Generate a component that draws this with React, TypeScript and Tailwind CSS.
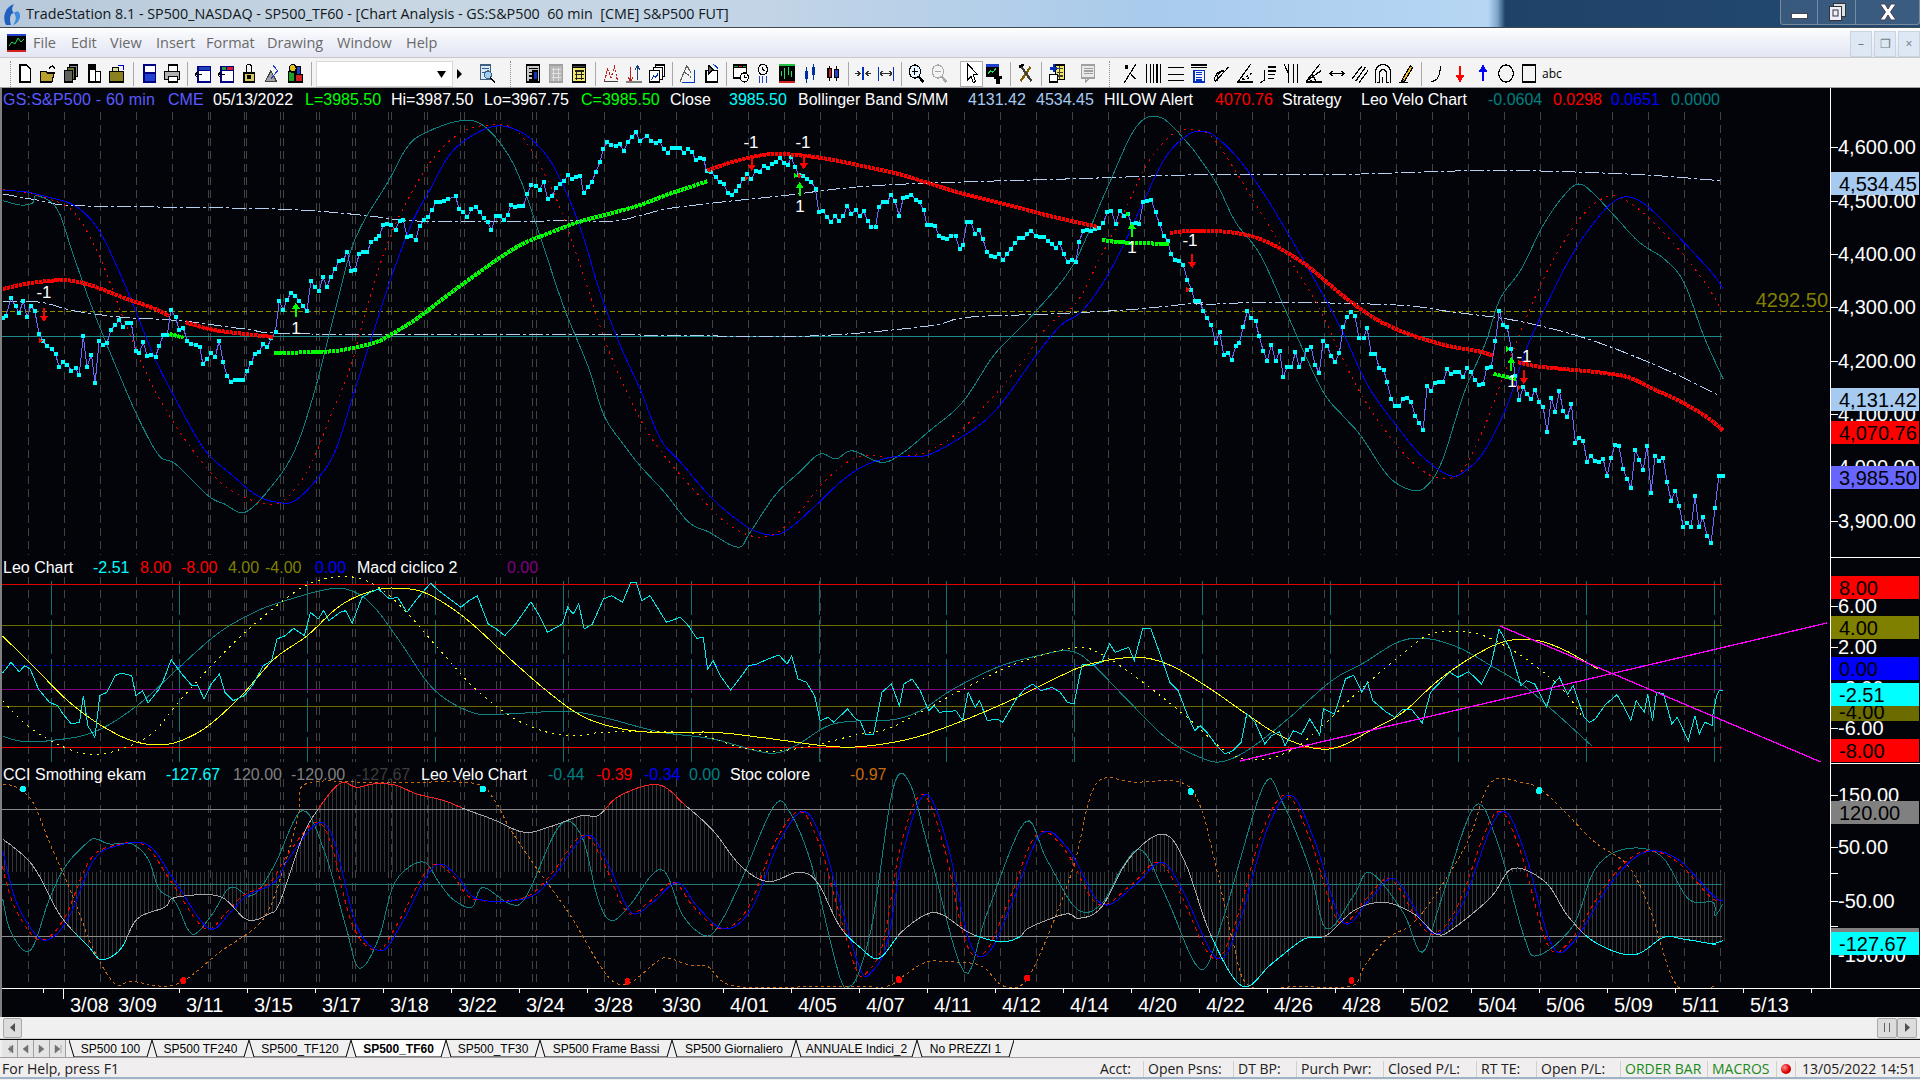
import React from "react";

type P = [number, number];
const map = (ox: number, sx: number, oy: number) => (pts: number[][]): P[] =>
  pts.map(([x, y]) => [ox + x / sx, oy + y / 3] as P);
const Z7 = map(0, 2.45, 100);
const Z8 = map(640, 2.45, 100);
const Z9 = map(1200, 2.8, 100);
const Z10 = map(0, 1.823, 550);
const Z11 = map(860, 1.823, 550);
const Z6 = map(1700, 3, 540);

const smooth = (pts: P[]): P[] => {
  const out: P[] = [];
  for (let i = 0; i < pts.length - 1; i++) {
    const p0 = pts[Math.max(0, i - 1)], p1 = pts[i], p2 = pts[i + 1], p3 = pts[Math.min(pts.length - 1, i + 2)];
    for (let k = 0; k < 6; k++) {
      const t = k / 6, t2 = t * t, t3 = t2 * t;
      out.push([
        0.5 * (2 * p1[0] + (p2[0] - p0[0]) * t + (2 * p0[0] - 5 * p1[0] + 4 * p2[0] - p3[0]) * t2 + (3 * p1[0] - p0[0] - 3 * p2[0] + p3[0]) * t3),
        0.5 * (2 * p1[1] + (p2[1] - p0[1]) * t + (2 * p0[1] - 5 * p1[1] + 4 * p2[1] - p3[1]) * t2 + (3 * p1[1] - p0[1] - 3 * p2[1] + p3[1]) * t3),
      ]);
    }
  }
  out.push(pts[pts.length - 1]);
  return out;
};
const str = (pts: P[]) => pts.map((p) => `${p[0].toFixed(1)},${p[1].toFixed(1)}`).join(" ");
const yAt = (pts: P[], x: number) => {
  for (let i = 0; i < pts.length - 1; i++) {
    if (pts[i][0] <= x && pts[i + 1][0] >= x) {
      const d = pts[i + 1][0] - pts[i][0] || 1;
      return pts[i][1] + ((x - pts[i][0]) / d) * (pts[i + 1][1] - pts[i][1]);
    }
  }
  return pts[pts.length - 1][1];
};

/* ---------- main pane data ---------- */
const price: P[] = [
  ...Z7([[7,657],[15,650],[27,597],[38,622],[47,642],[57,605],[66,655],[76,620],[85,635],[96,705],[105,725],[115,740],[127,750],[136,765],[145,805],[155,790],[165,797],[175,815],[185,808],[194,827],[204,712],[213,803],[224,767],[233,852],[243,725],[252,738],[262,733],[272,692],[282,678],[292,664],[302,683],[312,673],[322,673],[332,757],[341,762],[351,730],[361,772],[371,767],[381,774],[390,741],[400,708],[410,708],[419,632],[430,655],[439,693],[449,688],[459,725],[469,735],[480,738],[489,745],[497,795],[507,780],[517,762],[527,775],[537,725],[547,790],[556,830],[566,848],[576,843],[586,843],[596,843],[606,815],[615,792],[625,765],[635,758],[645,735],[655,745],[665,718],[675,698],[684,607],[694,632],[703,603],[713,583],[723,590],[733,605],[743,622],[752,637],[762,545],[772,565],[782,575],[791,535],[801,563],[811,533],[821,510],[831,485],[841,483],[851,458],[860,517],[870,512],[880,465],[890,460],[900,458],[910,428],[920,420],[929,412],[939,378],[949,376],[959,378],[969,392],[979,365],[988,364],[998,415],[1008,412],[1018,424],[1028,380],[1038,364],[1048,355],[1058,333],[1068,310],[1078,310],[1088,305],[1098,300],[1116,292],[1125,330],[1135,338],[1145,355],[1155,330],[1165,325],[1175,340],[1185,357],[1195,368],[1204,394],[1214,352],[1224,352],[1234,362],[1244,348],[1252,318],[1262,325],[1272,322],[1282,320],[1292,285],[1302,258],[1312,260],[1322,272],[1332,250],[1342,300],[1352,290],[1362,268],[1372,255],[1382,245],[1392,228],[1402,240],[1412,235],[1422,232],[1430,283],[1440,265],[1450,250],[1460,218],[1470,190],[1478,150],[1488,130],[1498,138],[1508,140],[1518,136],[1528,155],[1538,130],[1548,115],[1558,100]]),
  ...Z8([[0,125],[18,110],[28,125],[38,133],[48,127],[58,150],[68,162],[78,147],[88,147],[98,148],[108,162],[118,150],[128,160],[136,183],[146,177],[156,180],[163,215],[175,220],[185,235],[195,250],[205,255],[215,282],[225,287],[235,275],[243,260],[253,240],[263,225],[273,240],[283,215],[293,218],[303,200],[313,208],[323,196],[333,190],[343,178],[353,192],[362,198],[371,175],[380,205],[390,228],[400,232],[410,240],[420,248],[430,270],[438,340],[448,335],[458,355],[468,368],[478,352],[488,367],[498,352],[508,320],[518,345],[528,333],[538,352],[548,337],[558,367],[567,385],[577,385],[585,325],[595,310],[605,310],[615,287],[625,307],[635,350],[645,297],[655,295],[665,287],[675,302],[685,310],[695,333],[703,378],[713,378],[723,382],[733,410],[743,417],[753,420],[763,412],[773,410],[783,450],[791,437],[801,370],[811,368],[821,405],[830,392],[840,420],[850,458],[860,470],[870,475],[880,465],[889,483],[899,465],[909,450],[919,432],[929,418],[939,418],[949,405],[959,395],[969,410],[979,415],[989,415],[999,425],[1009,435],[1019,448],[1028,432],[1038,465],[1048,490],[1058,482],[1068,490],[1076,428],[1085,397],[1095,392],[1105,395],[1115,390],[1125,388],[1135,372],[1145,340],[1155,335],[1165,375],[1175,335],[1185,350],[1195,345],[1205,375],[1215,373],[1223,375],[1233,310],[1243,305],[1253,302],[1263,340],[1273,375],[1283,410],[1293,425],[1301,465],[1311,483],[1321,485],[1331,498],[1341,542],[1351,572],[1360,607],[1370,605],[1380,635],[1390,657],[1400,678],[1410,733],[1420,700],[1430,767],[1440,762],[1450,782],[1460,740],[1468,733],[1478,685],[1488,637],[1498,657],[1508,667],[1517,712],[1527,757],[1537,785],[1547,738],[1557,787],[1567,757]]),
  ...Z9([[233,833],[244,805],[256,805],[267,760],[278,803],[289,780],[300,752],[311,745],[322,797],[334,822],[345,725],[356,740],[367,770],[379,788],[390,763],[401,685],[412,655],[423,640],[434,650],[445,718],[458,718],[468,687],[480,765],[491,765],[502,808],[514,812],[524,848],[535,900],[547,922],[558,920],[569,900],[580,896],[591,908],[603,952],[614,972],[625,992],[636,862],[647,875],[658,852],[669,850],[681,848],[692,810],[703,825],[714,818],[725,818],[737,835],[748,808],[759,820],[770,842],[781,857],[793,855],[803,806],[815,805],[827,727],[838,635],[849,678],[860,683],[872,750],[883,832],[894,903],[905,865],[916,885],[927,900],[938,872],[950,908],[961,925],[972,1000],[984,897],[995,940],[1006,875],[1017,935],[1028,955],[1040,916],[1051,1032],[1062,1017],[1073,1025],[1084,1088],[1095,1072],[1107,1087],[1118,1090],[1129,1080],[1140,1130],[1151,1078],[1162,1037],[1173,1040],[1185,1110],[1196,1140],[1207,1167],[1219,1052],[1230,1082],[1241,1112],[1252,1040],[1263,1182],[1274,1070],[1286,1085],[1297,1078],[1308,1148],[1319,1205],[1331,1175],[1342,1222],[1353,1283],[1364,1272],[1375,1285],[1386,1192],[1397,1285],[1408,1255],[1420,1310],[1431,1332],[1442,1228],[1453,1130],[1465,1130]]),
];
const redMA: P[][] = [
  Z7([[7,570],[70,553],[140,544],[180,546],[230,562],[300,595],[370,625],[415,650]]),
  Z7([[455,670],[520,692],[600,705],[668,714]]),
  Z8([[165,215],[210,195],[270,175],[330,165],[400,170],[470,182],[560,205],[640,227],[700,250],[800,287],[900,317],[1000,350],[1120,383]]),
  [...Z8([[1298,402],[1350,395]]), ...Z9([[0,396],[60,397],[140,410],[200,435],[250,465],[300,500],[350,545],[400,590],[450,630],[500,665],[560,695],[620,718],[700,742],[780,757],[820,770]])],
  Z9([[890,790],[950,803],[1050,813],[1130,822],[1200,835],[1280,875],[1350,910],[1420,955],[1465,995]]),
];
const greenMA: P[][] = [
  Z7([[415,705],[450,716]]),
  [...Z7([[672,762],[800,758],[860,748],[920,730],[960,705],[1020,660],[1090,595],[1140,550],[1220,480],[1280,435],[1340,405],[1420,368],[1500,342],[1568,318]]), ...Z8([[60,290],[120,265],[165,247]])],
  Z8([[1132,423],[1180,430],[1295,435]]),
  Z9([[822,825],[885,840]]),
];
const blueBand: P[] = [
  ...Z7([[7,275],[60,278],[120,295],[170,312],[210,345],[250,410],[300,540],[340,660],[380,780],[430,900],[500,1050],[570,1130],[630,1190],[680,1210],[720,1207],[770,1150],[820,1060],[870,870],[920,680],[960,530],[1010,370],[1050,280],[1100,170],[1150,115],[1210,82],[1260,90],[1310,130],[1360,210],[1420,380],[1470,580],[1520,740],[1568,870]]),
  ...Z8([[50,1020],[100,1090],[170,1190],[230,1255],[280,1295],[330,1308],[370,1285],[430,1220],[490,1150],[550,1100],[620,1074],[700,1070],[780,1020],[850,960],[900,890],[970,770],[1030,680],[1080,640],[1130,560],[1180,450],[1240,290],[1290,170],[1340,110]]),
  ...Z9([[0,97],[40,110],[100,170],[170,270],[250,410],[330,560],[400,700],[470,860],[550,980],[620,1070],[700,1130],[750,1110],[800,1050],[860,920],[910,760],[960,640],[1030,490],[1100,375],[1170,300],[1230,305],[1300,370],[1390,470],[1440,530],[1465,570]]),
];
const redBand: P[] = [
  ...Z7([[7,272],[80,285],[160,320],[200,370],[250,490],[300,650],[350,800],[400,920],[470,1050],[540,1150],[600,1195],[650,1215],[700,1200],[760,1100],[810,950],[860,800],[900,620],[950,430],[1000,300],[1060,180],[1130,100],[1200,78],[1260,90],[1310,170],[1370,320],[1430,530],[1490,750],[1568,960]]),
  ...Z8([[60,1070],[130,1170],[200,1260],[270,1310],[330,1305],[390,1240],[450,1150],[530,1075],[620,1074],[700,1060],[780,1000],[860,900],[930,800],[1000,680],[1070,610],[1130,470],[1190,330],[1240,200],[1300,110],[1350,92]]),
  ...Z9([[30,110],[90,200],[170,340],[250,480],[330,620],[400,780],[470,920],[560,1050],[630,1120],[680,1137],[730,1120],[790,1000],[850,830],[920,640],[990,480],[1070,350],[1130,297],[1180,297],[1250,350],[1340,450],[1420,560],[1465,645]]),
];
const tealBand: P[] = [
  ...Z7([[7,305],[50,318],[80,312],[90,290],[140,330],[180,470],[230,640],[290,820],[340,960],[390,1070],[430,1095],[510,1190],[550,1215],[600,1240],[660,1170],[720,1060],[770,880],[820,640],[870,420],[950,250],[1000,140],[1050,97],[1130,65],[1190,85],[1260,200],[1320,400],[1380,620],[1440,800],[1480,950],[1530,1040],[1568,1100]]),
  ...Z8([[60,1180],[120,1270],[170,1300],[240,1345],[270,1300],[330,1190],[390,1120],[440,1065],[480,1080],[520,1055],[590,1090],[640,1065],[710,995],[790,910],[860,780],[900,725],[960,650],[1060,500],[1140,280],[1215,85],[1275,55],[1340,130]]),
  ...Z9([[0,180],[50,260],[100,370],[170,470],[250,660],[340,870],[400,950],[450,1010],[530,1135],[600,1175],[640,1155],[680,1080],[740,880],[800,730],[840,600],[900,510],[960,380],[1020,288],[1060,255],[1100,282],[1160,350],[1230,430],[1300,480],[1355,550],[1410,710],[1465,840]]),
];
const upperBB: P[] = [
  ...Z7([[7,285],[100,305],[180,320],[460,325],[720,332],[900,350],[1000,365],[1200,368],[1400,365],[1500,367],[1568,350]]),
  ...Z8([[90,325],[350,290],[600,258],[1100,238]]),
  ...Z9([[0,227],[400,226],[650,218],[830,214],[1020,218],[1250,228],[1455,245]]),
];
const lowerBB: P[] = [
  ...Z7([[7,607],[100,610],[180,635],[300,655],[440,665],[600,690],[760,705],[1568,708]]),
  ...Z8([[400,712],[700,682],[800,655],[1000,645],[1200,632],[1368,612]]),
  ...Z9([[0,617],[200,610],[550,618],[700,638],[900,668],[1100,725],[1300,810],[1455,890]]),
];

/* ---------- pane 2 data ---------- */
const leoCyan: P[] = [
  ...Z10([[5,372],[20,340],[35,368],[45,350],[55,360],[70,420],[90,460],[105,470],[115,495],[130,525],[145,520],[152,440],[160,530],[173,565],[182,440],[195,430],[210,380],[220,372],[240,380],[248,440],[260,425],[270,462],[290,420],[300,385],[312,332],[330,372],[350,410],[360,408],[372,450],[385,405],[400,375],[410,430],[425,455],[445,440],[460,410],[480,350],[495,335],[505,270],[520,260],[535,238],[555,260],[566,190],[580,210],[590,185],[600,215],[620,190],[630,185],[642,222],[660,145],[675,130],[690,120],[710,150],[725,145],[742,190],[760,150],[785,103],[800,125],[820,150],[840,175],[855,155],[870,140],[890,225],[905,240],[920,260],[940,225],[968,158],[985,205],[998,250],[1025,225],[1035,175],[1045,195],[1055,165],[1065,240],[1080,225],[1100,150],[1115,140],[1135,160],[1150,100],[1160,100],[1170,155],[1185,140],[1215,220],[1240,205],[1255,230],[1270,268],[1282,265],[1290,360],[1300,335],[1315,385],[1332,423],[1350,385],[1365,350],[1380,345],[1400,330],[1420,318],[1435,345],[1443,320],[1455,390],[1470,400],[1485,440],[1495,515],[1510,505],[1520,520],[1545,480],[1560,510]]),
  ...Z11([[0,515],[10,555],[25,555],[40,430],[57,405],[72,470],[80,405],[95,390],[110,425],[125,485],[135,470],[145,490],[175,485],[187,515],[197,430],[210,475],[218,455],[232,515],[250,510],[260,520],[285,450],[300,420],[315,405],[330,425],[350,415],[365,430],[378,460],[390,465],[405,345],[420,350],[440,340],[455,285],[465,310],[490,295],[500,335],[515,240],[530,238],[548,320],[565,400],[580,425],[595,490],[610,545],[620,530],[635,555],[650,590],[665,615],[680,605],[695,580],[705,495],[720,520],[738,585],[750,560],[765,548],[775,590],[790,545],[805,555],[820,510],[838,558],[845,480],[865,495],[885,390],[900,378],[915,430],[925,400],[935,455],[960,490],[975,505],[990,480],[1005,480],[1025,522],[1040,430],[1060,395],[1075,370],[1090,385],[1110,368],[1133,405],[1150,350],[1165,240],[1185,300],[1205,410],[1215,395],[1230,405],[1252,475],[1262,410],[1275,385],[1290,435],[1300,410],[1320,505],[1330,520],[1340,510],[1360,465],[1380,437],[1395,480],[1405,515],[1415,455],[1430,490],[1436,435],[1445,515],[1452,430],[1465,435],[1480,525],[1490,505],[1510,575],[1522,500],[1530,555],[1540,520],[1555,530]]),
  ...Z6([[38,530],[50,470],[58,455],[68,455]]),
];
const yellowSolid: P[] = [
  ...Z10([[5,262],[60,350],[120,450],[180,525],[240,575],[290,587],[330,575],[380,530],[440,440],[500,330],[560,260],[620,170],[680,125],[730,118],[780,135],[850,210],[930,330],[1000,430],[1060,500],[1120,535],[1190,550],[1300,550],[1400,568],[1500,590]]),
  ...Z11([[0,593],[90,570],[180,520],[280,450],[360,385],[420,345],[500,325],[560,345],[630,410],[700,490],[760,555],[820,595],[870,595],[930,545],[990,490],[1050,400],[1110,330],[1170,280],[1225,272],[1280,300],[1345,360]]),
];
const yellowDash: P[] = [
  ...Z10([[5,455],[50,530],[110,590],[170,617],[230,595],[280,550],[320,470],[380,360],[440,260],[520,150],[570,100],[630,82],[680,105],[730,170],[800,300],[870,425],[950,520],[1030,560],[1100,550],[1200,548],[1270,555],[1350,595],[1410,607],[1480,590]]),
  ...Z11([[0,555],[50,540],[110,490],[200,410],[290,340],[390,297],[440,315],[520,405],[600,510],[670,610],[730,632],[790,600],[850,520],[920,410],[1000,300],[1040,255],[1090,247],[1140,262],[1210,325],[1280,420],[1320,510]]),
];
const tealLeo: P[] = [
  ...Z10([[5,562],[40,577],[90,575],[170,550],[250,470],[330,350],[400,250],[470,185],[530,150],[600,120],[640,125],[680,170],[730,280],[790,420],[860,490],[920,495],[1030,487],[1100,505],[1200,548],[1300,570],[1400,612],[1450,590],[1510,530]]),
  ...Z11([[0,515],[60,512],[110,485],[170,420],[250,355],[320,322],[380,305],[420,340],[480,440],[560,570],[620,625],[660,638],[710,600],[780,510],[860,395],[920,340],[980,280],[1030,268],[1090,295],[1150,350],[1210,410],[1270,495],[1335,592]]),
];

/* ---------- pane 3 data ---------- */
const stoch: P[] = [
  ...Z10([[5,705],[30,715],[60,760],[90,880],[130,1030],[170,1200],[210,1305],[240,1297],[300,1312],[340,1290],[400,1210],[480,1110],[520,940],[545,790],[560,702],[700,702],[860,702],[900,750],[930,840],[975,950],[1040,1100],[1090,1240],[1120,1300],[1150,1300],[1200,1235],[1220,1228],[1260,1250],[1290,1252],[1340,1312],[1500,1312]]),
  ...Z11([[0,1312],[50,1312],[80,1280],[120,1240],[160,1238],[220,1250],[260,1310],[300,1300],[340,1170],[390,950],[430,705],[500,700],[585,700],[620,770],[650,960],[680,1180],[710,1312],[800,1312],[895,1312],[920,1250],[960,1170],[1010,1120],[1060,1010],[1110,870],[1150,700],[1210,702],[1240,720],[1280,780],[1340,880],[1400,950],[1440,1080],[1490,1312],[1560,1312]]),
];
const cci: P[] = smooth([
  ...Z10([[5,870],[60,950],[110,1100],[160,1190],[185,1232],[220,1200],[250,1110],[300,1075],[320,1045],[400,1042],[450,1112],[490,1095],[510,1060],[550,870],[580,780],[620,703],[650,715],[680,705],[720,708],[760,735],[810,755],[850,782],[900,812],[955,850],[1000,835],[1060,800],[1090,800],[1130,740],[1200,707],[1250,770],[1300,845],[1350,950],[1400,998],[1455,970],[1490,1000],[1530,1130]]),
  ...Z11([[0,1195],[35,1228],[75,1150],[120,1097],[150,1097],[200,1152],[255,1178],[290,1165],[310,1135],[375,1095],[400,1108],[440,1075],[490,930],[550,855],[590,930],[640,1160],[697,1312],[750,1245],[810,1170],[850,1160],[900,1085],[955,1060],[1010,1095],[1050,1155],[1080,1140],[1150,1045],[1190,958],[1250,1000],[1290,1100],[1340,1180],[1410,1218],[1465,1165],[1500,1170],[1555,1185]]),
  ...Z6([[40,1215],[68,1205]]),
]);
const blue3: P[] = [
  ...Z10([[5,905],[30,1060],[70,1165],[100,1160],[130,1090],[170,935],[210,892],[270,888],[320,1000],[380,1138],[420,1090],[450,1040],[500,1000],[530,920],[580,822],[610,880],[650,1130],[695,1205],[730,1130],[790,955],[830,975],[870,1050],[960,1048],[1010,980],[1070,858],[1110,950],[1150,1090],[1190,1060],[1235,1000],[1270,1070],[1320,1140],[1370,1080],[1420,880],[1465,787],[1500,880],[1530,1050]]),
  ...Z11([[0,1260],[20,1270],[50,1180],[80,900],[120,735],[160,890],[200,1180],[235,1210],[280,1050],[330,855],[380,900],[440,1065],[500,1010],[550,940],[590,1030],[650,1228],[690,1130],[740,850],[785,738],[830,880],[880,1120],[930,1050],[975,990],[1030,1130],[1060,1150],[1100,1060],[1165,792],[1210,900],[1260,1185],[1300,1180],[1370,1000],[1430,910],[1490,930],[1555,1040]]),
  ...Z6([[68,1085]]),
];
const teal3: P[] = [
  ...Z10([[5,1050],[20,1150],[55,1205],[90,1050],[120,950],[160,880],[175,870],[200,885],[240,885],[270,930],[290,1020],[320,1060],[350,1155],[385,1100],[420,1015],[460,1040],[500,950],[550,785],[590,900],[630,1130],[655,1258],[690,1170],[720,1000],[770,938],[800,1000],[825,1050],[860,1075],[880,1015],[930,1065],[960,1040],[1020,830],[1060,860],[1090,1050],[1115,1115],[1150,1065],[1190,975],[1215,975],[1245,1100],[1285,1160],[1310,1130],[1350,1000],[1410,773],[1440,790],[1480,950],[1530,1280],[1550,1310]]),
  ...Z11([[0,1260],[25,1100],[60,720],[90,700],[130,930],[190,1270],[230,1100],[300,820],[340,930],[395,1080],[440,1065],[480,950],[515,905],[560,1050],[620,1260],[660,1120],[735,712],[770,760],[820,960],[850,1140],[900,1040],[930,970],[990,1090],[1025,1210],[1060,1050],[1120,772],[1160,870],[1210,1160],[1235,1220],[1300,1130],[1340,960],[1395,900],[1460,920],[1510,1050],[1555,1060]]),
  ...Z6([[45,1130],[68,1095]]),
];

const cciRuns = (() => {
  const runs: { c: string; pts: P[] }[] = [];
  const col = (y: number) => (y < 810 ? "#ff2020" : y > 937 ? "#00ffff" : "#a8a8a8");
  cci.forEach((p, i) => {
    const c = col(p[1]);
    const last = runs[runs.length - 1];
    if (!last || last.c !== c) runs.push({ c, pts: i ? [cci[i - 1], p] : [p] });
    else last.pts.push(p);
  });
  return runs;
})();

const gridA = Array.from({ length: 48 }, (_, i) => 28 + 36 * i);
const gridB = Array.from({ length: 10 }, (_, i) => 210.6 + 36.2 * i);
const VGrid = ({ y1, y2 }: { y1: number; y2: number }) => (
  <g stroke="#424242" strokeDasharray="8 5">
    {[...gridA, ...gridB].map((x) => (
      <line key={x} x1={x} x2={x} y1={y1} y2={y2} />
    ))}
  </g>
);
const Arrow = ({ x, y, up, color }: { x: number; y: number; up?: boolean; color: string }) => (
  <path
    fill={color}
    d={up ? `M${x} ${y - 7}l4 6h-3v8h-2v-8h-3z` : `M${x} ${y + 7}l4 -6h-3v-8h-2v8h-3z`}
  />
);
const Tri = ({ x, y, color, left }: { x: number; y: number; color: string; left?: boolean }) => (
  <path fill={color} d={left ? `M${x + 2} ${y - 3}v6l-4 -3z` : `M${x - 2} ${y - 3}v6l4 -3z`} />
);
const T = ({ x, y, v }: { x: number; y: number; v: string }) => (
  <text x={x} y={y} fill="#fff" fontSize="17" textAnchor="middle" fontFamily="'Liberation Sans', sans-serif">
    {v}
  </text>
);
const pt7 = (x: number, y: number): P => [x / 2.45, 100 + y / 3];
const pt8 = (x: number, y: number): P => [640 + x / 2.45, 100 + y / 3];
const pt9 = (x: number, y: number): P => [1200 + x / 2.8, 100 + y / 3];

const MainPlot = () => (
  <svg width={1828} height={469} viewBox="2 89 1828 469" shapeRendering="crispEdges" className="block">
    <VGrid y1={113} y2={556} />
    <line x1={2} x2={1830} y1={312} y2={312} stroke="#8f8f00" strokeDasharray="5 3" />
    <line x1={2} x2={1722} y1={337} y2={337} stroke="#1f8a8a" />
    <polyline points={str(smooth(upperBB))} fill="none" stroke="#b4d0f0" strokeDasharray="14 3 3 3" />
    <polyline points={str(smooth(lowerBB))} fill="none" stroke="#b4d0f0" strokeDasharray="14 3 3 3" />
    <polyline points={str(smooth(tealBand))} fill="none" stroke="#0f8080" />
    <polyline points={str(smooth(redBand))} fill="none" stroke="#ff0000" strokeDasharray="2 5" />
    <polyline points={str(smooth(blueBand))} fill="none" stroke="#0000ff" />
    <polyline points={str(price)} fill="none" stroke="#6a6af5" />
    <path fill="#00ffff" d={price.map((p) => `M${(p[0] - 2).toFixed(1)} ${(p[1] - 2).toFixed(1)}h4v4h-4z`).join("")} />
    {redMA.map((s, i) => (
      <polyline key={i} points={str(smooth(s))} fill="none" stroke="#ff0000" strokeWidth={4} strokeDasharray="3.4 0.7" />
    ))}
    {greenMA.map((s, i) => (
      <polyline key={i} points={str(smooth(s))} fill="none" stroke="#00ff00" strokeWidth={4} strokeDasharray="3.4 0.7" />
    ))}
    <T x={44} y={299} v="-1" />
    <T x={296} y={335} v="1" />
    <T x={751} y={149} v="-1" />
    <T x={803} y={149} v="-1" />
    <T x={800} y={213} v="1" />
    <T x={1132} y={254} v="1" />
    <T x={1190} y={247} v="-1" />
    <T x={1524} y={363} v="-1" />
    <T x={1512} y={388} v="1" />
    <Arrow x={pt7(108, 648)[0]} y={pt7(108, 648)[1]} color="#ff0000" />
    <Arrow x={pt7(725, 632)[0]} y={pt7(725, 632)[1]} up color="#00ff00" />
    <Arrow x={pt8(274, 195)[0]} y={pt8(274, 195)[1]} color="#ff0000" />
    <Arrow x={pt8(401, 190)[0]} y={pt8(401, 190)[1]} color="#ff0000" />
    <Arrow x={pt8(391, 270)[0]} y={pt8(391, 270)[1]} up color="#00ff00" />
    <Arrow x={pt8(1205, 392)[0]} y={pt8(1205, 392)[1]} up color="#00ff00" />
    <Arrow x={pt8(1353, 487)[0]} y={pt8(1353, 487)[1]} color="#ff0000" />
    <Arrow x={pt9(872, 795)[0]} y={pt9(872, 795)[1]} up color="#00ff00" />
    <Arrow x={pt9(907, 835)[0]} y={pt9(907, 835)[1]} color="#ff0000" />
    <Tri x={pt7(100, 725)[0]} y={pt7(100, 725)[1]} color="#ff0000" />
    <Tri x={pt8(262, 238)[0]} y={pt8(262, 238)[1]} color="#ff0000" />
    <Tri x={pt8(382, 230)[0]} y={pt8(382, 230)[1]} color="#00ff00" />
    <Tri x={pt8(392, 230)[0]} y={pt8(392, 230)[1]} color="#ff0000" />
    <Tri x={pt8(1195, 345)[0]} y={pt8(1195, 345)[1]} color="#00ff00" />
    <Tri x={pt8(1343, 572)[0]} y={pt8(1343, 572)[1]} color="#ff0000" />
    <Tri x={pt9(862, 750)[0]} y={pt9(862, 750)[1]} color="#00ff00" />
    <Tri x={pt9(895, 865)[0]} y={pt9(895, 865)[1]} color="#ff0000" />
    <text x={1828} y={308} textAnchor="end" fill="#808000" fontSize="20" fontFamily="'Liberation Sans', sans-serif">
      4292.50
    </text>
  </svg>
);

const tealTicks = Array.from({ length: 14 }, (_, i) => 51 + 128 * i - (i > 6 ? 1 : 0));
const Pane2Plot = () => (
  <svg width={1828} height={206} viewBox="2 558 1828 206" shapeRendering="crispEdges" className="block">
    <VGrid y1={578} y2={763} />
    <g stroke="#0f7070" strokeDasharray="34 5">
      {tealTicks.map((x) => (
        <line key={x} x1={x} x2={x} y1={582} y2={763} />
      ))}
    </g>
    <line x1={2} x2={1722} y1={585} y2={585} stroke="#e00000" />
    <line x1={2} x2={1722} y1={626} y2={626} stroke="#6b6b00" />
    <line x1={2} x2={1722} y1={666} y2={666} stroke="#0000ff" strokeDasharray="3 3" />
    <line x1={2} x2={1722} y1={690} y2={690} stroke="#800080" />
    <line x1={2} x2={1722} y1={707} y2={707} stroke="#6b6b00" />
    <line x1={2} x2={1722} y1={748} y2={748} stroke="#ff0000" />
    <polyline points={str(smooth(tealLeo))} fill="none" stroke="#0f8080" />
    <polyline points={str(smooth(yellowDash))} fill="none" stroke="#ffff00" strokeDasharray="2 5" />
    <polyline points={str(smooth(yellowSolid))} fill="none" stroke="#ffff00" />
    <polyline points={str(leoCyan)} fill="none" stroke="#00e8e8" />
    <line x1={1240} y1={762} x2={1827} y2={624} stroke="#ff00ff" strokeWidth={1.3} />
    <line x1={1500} y1={627} x2={1821} y2={763} stroke="#ff00ff" strokeWidth={1.3} />
  </svg>
);

const hist = Array.from({ length: 431 }, (_, i) => 4 + i * 4);
const Pane3Plot = () => {
  const blueS = smooth(blue3);
  const redS = blueS.map((p) => [p[0] - 4, p[1]] as P);
  return (
    <svg width={1828} height={225} viewBox="2 764 1828 225" shapeRendering="crispEdges" className="block">
      <VGrid y1={780} y2={988} />
      <g stroke="#363636">
        {hist.map((x) => (
          <line key={x} x1={x} x2={x} y1={873} y2={yAt(cci, x)} />
        ))}
      </g>
      <line x1={2} x2={1722} y1={810} y2={810} stroke="#8a8a8a" />
      <line x1={2} x2={1722} y1={885} y2={885} stroke="#1f7a7a" />
      <line x1={2} x2={1722} y1={937} y2={937} stroke="#8a8a8a" />
      <polyline points={str(smooth(stoch))} fill="none" stroke="#c86a10" strokeDasharray="3 3" />
      <polyline points={str(smooth(teal3))} fill="none" stroke="#0f8080" />
      <polyline points={str(redS)} fill="none" stroke="#ff0000" strokeDasharray="4 4" />
      <polyline points={str(blueS)} fill="none" stroke="#0000ff" />
      {cciRuns.map((r, i) => (
        <polyline key={i} points={str(r.pts)} fill="none" stroke={r.c} />
      ))}
      {[[42, 720], [880, 720]].map(([x, y], i) => (
        <ellipse key={i} cx={x / 1.823} cy={550 + y / 3} rx={3} ry={3.5} fill="#00ffff" />
      ))}
      {[[603, 728], [1238, 725]].map(([x, y], i) => (
        <ellipse key={i} cx={860 + x / 1.823} cy={550 + y / 3} rx={3} ry={3.5} fill="#00ffff" />
      ))}
      {[[334, 1295], [1144, 1298]].map(([x, y], i) => (
        <ellipse key={i} cx={x / 1.823} cy={550 + y / 3} rx={3} ry={3.5} fill="#ff0000" />
      ))}
      {[[71, 1292], [305, 1287], [896, 1295]].map(([x, y], i) => (
        <ellipse key={i} cx={860 + x / 1.823} cy={550 + y / 3} rx={3} ry={3.5} fill="#ff0000" />
      ))}
    </svg>
  );
};

/* ---------- axis ---------- */
type AL = { t: string; y: number };
type AB = { t: string; top: number; h?: number; bg: string };
const AxisCol = ({ labels, badges, ticks, h, top, line }: { labels: AL[]; badges: AB[]; ticks: number[]; h: string; top: number; line?: boolean }) => (
  <div className={`relative w-[90px] border-l border-white overflow-hidden font-['Liberation_Sans',sans-serif] ${h} ${line ? "border-t" : ""}`}>
    {ticks.map((y) => (
      <span key={y} className="absolute left-0 w-[7px] h-px bg-white" style={{ top: y - top }} />
    ))}
    {labels.map((l) => (
      <span key={l.t} className="absolute left-[7px] text-white text-[20px] leading-[24px] whitespace-nowrap" style={{ top: l.y - top - 12 }}>
        {l.t}
      </span>
    ))}
    {badges.map((b) => (
      <span
        key={b.t + b.top}
        className="absolute left-0 w-[88px] pl-[8px] text-black text-[20px] leading-[24px] whitespace-nowrap overflow-hidden"
        style={{ top: b.top - top, height: b.h ?? 23, backgroundColor: b.bg }}
      >
        {b.t}
      </span>
    ))}
  </div>
);

/* ---------- legends ---------- */
const LegendRow = ({ items, top }: { items: [string, string, string][]; top: string }) => (
  <div className={`absolute left-0 flex h-[20px] items-center whitespace-pre text-[16px] leading-[20px] font-['Liberation_Sans',sans-serif] ${top}`}>
    {items.map(([t, c, w], i) => (
      <span key={i} className={`${c} ${w}`}>
        {t}
      </span>
    ))}
  </div>
);
const legend1: [string, string, string][] = [
  ["GS:S&P500 - 60 min", "text-[#5a5aff] tracking-[0.2px]", "w-[166px] pl-[1px]"],
  ["CME", "text-[#5a5aff]", "w-[45px]"],
  ["05/13/2022", "text-white", "w-[92px]"],
  ["L=3985.50", "text-[#00ff00]", "w-[86px]"],
  ["Hi=3987.50", "text-white", "w-[93px]"],
  ["Lo=3967.75", "text-white", "w-[97px]"],
  ["C=3985.50", "text-[#00ff00]", "w-[89px]"],
  ["Close", "text-white", "w-[59px]"],
  ["3985.50", "text-[#00ffff]", "w-[69px]"],
  ["Bollinger Band S/MM", "text-white", "w-[170px]"],
  ["4131.42", "text-[#a6caf0]", "w-[68px]"],
  ["4534.45", "text-[#a6caf0]", "w-[68px]"],
  ["HILOW Alert", "text-white", "w-[111px]"],
  ["4070.76", "text-[#ff0000]", "w-[67px]"],
  ["Strategy", "text-white", "w-[79px]"],
  ["Leo Velo Chart", "text-white", "w-[127px]"],
  ["-0.0604", "text-[#008080]", "w-[65px]"],
  ["0.0298", "text-[#ff0000]", "w-[58px]"],
  ["0.0651", "text-[#0000ff]", "w-[60px]"],
  ["0.0000", "text-[#008080]", "w-[60px]"],
];
const legend2: [string, string, string][] = [
  ["Leo Chart", "text-white", "w-[91px] pl-[1px]"],
  ["-2.51", "text-[#00ffff]", "w-[47px]"],
  ["8.00", "text-[#ff0000]", "w-[41px]"],
  ["-8.00", "text-[#ff0000]", "w-[47px]"],
  ["4.00", "text-[#808000]", "w-[37px]"],
  ["-4.00", "text-[#808000]", "w-[50px]"],
  ["0.00", "text-[#0000ff]", "w-[42px]"],
  ["Macd ciclico 2", "text-white", "w-[150px]"],
  ["0.00", "text-[#800080]", "w-[40px]"],
];
const legend3: [string, string, string][] = [
  ["CCI Smothing ekam", "text-white", "w-[164px] pl-[1px]"],
  ["-127.67", "text-[#00ffff]", "w-[67px]"],
  ["120.00", "text-[#808080]", "w-[58px]"],
  ["-120.00", "text-[#808080]", "w-[65px]"],
  ["-127.67", "text-[#3c3c3c]", "w-[65px]"],
  ["Leo Velo Chart", "text-white", "w-[127px]"],
  ["-0.44", "text-[#008080]", "w-[48px]"],
  ["-0.39", "text-[#ff0000]", "w-[48px]"],
  ["-0.34", "text-[#0000ff]", "w-[45px]"],
  ["0.00", "text-[#008080]", "w-[41px]"],
  ["Stoc colore", "text-white", "w-[120px]"],
  ["-0.97", "text-[#c86a10]", "w-[40px]"],
];

/* ---------- toolbar icons ---------- */
const I = ({ children, w = 18, h = 21 }: { children: React.ReactNode; w?: number; h?: number }) => (
  <svg width={w} height={h} viewBox="0 0 16 16" preserveAspectRatio="none" shapeRendering="crispEdges">
    {children}
  </svg>
);
const icons: Record<string, React.ReactNode> = {
  doc: <path d="M3.5 1.5h6l3 3v10h-9z" fill="#fff" stroke="#000" />,
  open: <g stroke="#000"><path d="M1.5 6.5h5l1 1h6l-2 7h-10z" fill="#b8a030" /><path d="M9 4l3-2 2 2" fill="none" stroke="#000" /></g>,
  copies: <g stroke="#000"><rect x="6.5" y="1.5" width="7" height="9" fill="#909090" /><rect x="4.5" y="3.5" width="7" height="9" fill="#707030" /><rect x="2.5" y="5.5" width="7" height="9" fill="#606060" /></g>,
  paste: <g stroke="#000"><path d="M3.5 1.5h6v13h-6z" fill="#fff" /><path d="M9.5 6.5h4v8h-4z" fill="#fff" /><rect x="5" y="3" width="3" height="2" fill="#000" /></g>,
  save: <g stroke="#000"><rect x="1.5" y="6.5" width="12" height="8" fill="#8a8020" /><path d="M9 2h5M14 2v3" stroke="#0000c0" fill="none" /><rect x="4" y="3.5" width="5" height="3" fill="#d8d8a0" /></g>,
  preview: <g stroke="#000080"><rect x="3.5" y="1.5" width="10" height="13" fill="#fff" /><rect x="3.5" y="7.5" width="10" height="7" fill="#2040d0" /></g>,
  printer: <g stroke="#000"><rect x="4.5" y="1.5" width="8" height="5" fill="#fff" /><rect x="1.5" y="6.5" width="13" height="6" fill="#b0b0b0" /><rect x="4.5" y="10.5" width="8" height="4" fill="#fff" /></g>,
  winA: <g stroke="#000080"><rect x="3.5" y="2.5" width="11" height="12" fill="#fff" /><rect x="3.5" y="2.5" width="11" height="3" fill="#2040c0" /><path d="M1 9h6M3 7L1 9l2 2" fill="none" stroke="#000" /></g>,
  winB: <g stroke="#000080"><rect x="3.5" y="2.5" width="11" height="12" fill="#fff" /><rect x="3.5" y="2.5" width="5" height="3" fill="#20a040" /><rect x="8.5" y="2.5" width="6" height="3" fill="#d02020" /><path d="M1 9h6M3 7L1 9l2 2" fill="none" stroke="#000" /></g>,
  lock: <g stroke="#000"><path d="M5.5 7V3.5a2.5 2.5 0 015 0V7" fill="none" /><rect x="3.5" y="7.5" width="9" height="7" fill="#d8c860" /><rect x="7" y="10" width="2" height="2" fill="#000" /></g>,
  tools: <g><path d="M2 14l5-8 5 8z" fill="#a0a0a0" stroke="#404040" /><path d="M9 2l4 4-6 6" stroke="#2040c0" fill="none" /></g>,
  figures: <g stroke="#000"><rect x="2" y="6.5" width="6" height="8" fill="#20a020" /><rect x="8.5" y="8.5" width="6" height="6" fill="#d02020" /><circle cx="6" cy="4" r="3" fill="#e0c020" /><rect x="9" y="2.5" width="4" height="6" fill="#2040c0" /></g>,
  find: <g stroke="#406080"><rect x="1.5" y="1.5" width="9" height="11" fill="#e0e8f0" /><path d="M3 4h6M3 7h6" stroke="#2060a0" /><circle cx="8" cy="9" r="3" fill="#a0d0f0" /><path d="M10 11l4 4" stroke="#000" /></g>,
  calcA: <g stroke="#000"><rect x="2.5" y="1.5" width="11" height="13" fill="#c8c8c8" /><path d="M4 4h8" stroke="#000" /><rect x="8" y="6" width="4" height="7" fill="#1030c0" /><path d="M4 7h3M4 10h3M4 13h3" /></g>,
  calcB: <g stroke="#a0a0a0"><rect x="2.5" y="1.5" width="11" height="13" fill="#b8b8b8" /><path d="M4 5h8M4 8h8M4 11h8M6 4v10M10 4v10" stroke="#e0e0e0" /></g>,
  calcC: <g stroke="#000"><rect x="2.5" y="1.5" width="11" height="13" fill="#f0e868" /><rect x="2.5" y="1.5" width="11" height="2" fill="#404040" /><path d="M4 6h8M4 9h8M4 12h8M6 5v8M10 5v8" stroke="#202020" /></g>,
  chartRed: <g fill="none"><path d="M2 14l3-9 3 6 3-8 3 11" stroke="#c02020" strokeDasharray="2 1" /><path d="M2 14h12" stroke="#404040" /></g>,
  updown: <g fill="none"><path d="M5 3v10M3 11l2 3 2-3" stroke="#c02020" /><path d="M11 13V3M9 5l2-3 2 3" stroke="#204080" /><path d="M1 14.5h14" stroke="#808080" /></g>,
  stack: <g stroke="#000"><rect x="6.5" y="1.5" width="8" height="9" fill="#fff" /><rect x="4.5" y="3.5" width="8" height="9" fill="#fff" /><rect x="1.5" y="5.5" width="9" height="9" fill="#fff" /><path d="M3 13l2-3 2 1 2-3" fill="none" stroke="#0030c0" /></g>,
  diag: <g fill="none"><path d="M1 14l6-12 4 6" stroke="#606060" /><path d="M3 15h11M14 5v10" stroke="#0040c0" /><path d="M5 7l6 4" stroke="#606060" strokeDasharray="2 1" /></g>,
  docUp: <g stroke="#000"><rect x="3.5" y="5.5" width="10" height="9" fill="#fff" /><path d="M6 2l4 3-4 3z" fill="#606060" /><path d="M10 1l4 3" stroke="#0040c0" /></g>,
  clock: <g stroke="#000"><rect x="1.5" y="1.5" width="11" height="10" fill="#fff" /><rect x="1.5" y="1.5" width="11" height="2" fill="#20a040" /><rect x="6" y="1.5" width="3" height="2" fill="#d02020" /><circle cx="11" cy="11" r="3.5" fill="#fff" /><path d="M11 9v2h2" fill="none" /></g>,
  scale: <g stroke="#000" fill="none"><circle cx="7" cy="5" r="4" /><path d="M7 3v2l2 1" /><path d="M4 10v5M7 10v5M10 10v5" stroke="#2040c0" /></g>,
  blackChart: <g><rect x="1" y="1" width="14" height="14" fill="#000" /><rect x="1" y="14" width="14" height="1" fill="#d02020" /><rect x="1" y="1" width="14" height="1" fill="#20c040" /><path d="M3 10v-4M6 12V4M9 9V3M12 11V6" stroke="#20e060" /></g>,
  bars: <g><path d="M5 3v12M11 1v12" stroke="#0030a0" strokeWidth="1.5" /><rect x="3.5" y="6" width="3" height="6" fill="#0030a0" /><rect x="9.5" y="3" width="3" height="6" fill="#0030a0" /></g>,
  bars2: <g><path d="M5 2v12M11 2v12" stroke="#000" /><rect x="3.5" y="4" width="3" height="7" fill="#d02020" stroke="#000" /><rect x="9.5" y="5" width="3" height="6" fill="#2040d0" stroke="#000" /></g>,
  zoomH1: <g fill="none"><path d="M1 8h5M15 8h-5M3 6l2 2-2 2M13 6l-2 2 2 2" stroke="#303030" /><path d="M8 3v10" stroke="#0030c0" /></g>,
  zoomH2: <g fill="none"><path d="M1 3v11M15 3v11" stroke="#0030c0" /><path d="M3 8h10M5 6L3 8l2 2M11 6l2 2-2 2" stroke="#303030" /></g>,
  zoomIn: <g fill="none" stroke="#000"><circle cx="7" cy="6.5" r="5" fill="#e8f4ff" /><path d="M4.5 6.5h5M7 4v5" /><path d="M10.5 10.5l4 4" strokeWidth="2" /></g>,
  zoomOut: <g fill="none" stroke="#a8a8a8"><circle cx="7" cy="6.5" r="5" /><path d="M4.5 6.5h5" /><path d="M10.5 10.5l4 4" strokeWidth="2" /></g>,
  cursor: <path d="M5 1v12l3-3 2 5 2-1-2-5h4z" fill="#fff" stroke="#000" />,
  blackT: <g><rect x="1" y="1" width="11" height="10" fill="#000" /><rect x="1" y="1" width="11" height="2" fill="#2040d0" /><path d="M3 8l2-2 2 1 3-3" stroke="#20e060" fill="none" /><path d="M8 10h7v2h-2v4h-3v-4H8z" fill="#000" /></g>,
  hammer: <g stroke="#000"><path d="M3 14L12 3" strokeWidth="2" fill="none" stroke="#806000" /><path d="M13 14L4 3" strokeWidth="2" fill="none" stroke="#404040" /><path d="M2 3l4-2" strokeWidth="2" stroke="#000" /></g>,
  sheet: <g stroke="#000"><rect x="6.5" y="1.5" width="8" height="11" fill="#f0e868" /><path d="M8 4h5M8 7h5M8 10h5M10 2v10" stroke="#404040" /><rect x="1.5" y="8.5" width="7" height="6" fill="#fff" /><path d="M5 1v6M2 4h6" stroke="#0030c0" strokeWidth="2" /></g>,
  note: <g stroke="#a0a0a0" fill="none"><rect x="2.5" y="1.5" width="11" height="10" fill="#e8e8e8" /><path d="M4 4h8M4 6h8M4 8h8" /><path d="M6 11.5v3l3-3" /></g>,
  trend: <g fill="none" stroke="#000"><path d="M3 15L13 1" /><rect x="4" y="2" width="2" height="2" fill="#000" /><path d="M9 9l4 3" /></g>,
  vlines: <g stroke="#000"><path d="M2.5 1v14M5.5 1v14M8.5 1v14M11.5 1v14M14.5 1v14" /></g>,
  hlines: <g stroke="#000"><path d="M1 3.5h14M1 8.5h14M1 13.5h14" /></g>,
  gridBlue: <g stroke="#0030c0" fill="none"><path d="M1 1.5h14M1 3.5h14" stroke="#000" /><rect x="3.5" y="5.5" width="9" height="9" /><path d="M5 7h6M5 9h6M5 11h6M5 13h6" /></g>,
  arc: <g fill="none" stroke="#000"><path d="M1 14a8 8 0 018-8" /><path d="M4 14a6 6 0 016-8" /><path d="M2 14L14 3" /></g>,
  fib: <g fill="none" stroke="#000"><path d="M1 14.5h14M2 14L13 1" /><path d="M2 14l12-6M2 14l11-3" strokeDasharray="2 2" /></g>,
  steps: <g fill="none" stroke="#000"><path d="M1 15l4-2v-8" /><path d="M8 3h7M8 6h7M8 9h6M8 12h5" /></g>,
  speed: <g stroke="#000"><path d="M2 1l4 8v6M6 1v14M10 1v14M14 1v14" fill="none" /></g>,
  andrew: <g fill="none" stroke="#000"><path d="M1 14.5h14M1 14L13 1M1 14L14 6" /><path d="M3 12l3 2M6 8l4 6" /></g>,
  harrow: <g fill="none" stroke="#000"><path d="M2 8h12M4 6L2 8l2 2M12 6l2 2-2 2" /></g>,
  parallel: <g fill="none" stroke="#000"><path d="M1 12L10 2M4 14l9-11M7 15l8-9" /></g>,
  arcs: <g fill="none" stroke="#000"><path d="M1 15V8a7 7 0 0114 0v7" /><path d="M5 15v-7a3 3 0 016 0v7" /><path d="M3 15h2M7.5 11v4M11 15h2" /></g>,
  pencil: <g stroke="#000"><path d="M5 12L12 2l2 1.5-7 10z" fill="#f0c020" /><path d="M5 12l-1 2.5 3-1" fill="#e08060" /><path d="M2 15h8" /></g>,
  curve: <path d="M3 14c4 0 8-3 8-12" fill="none" stroke="#000" />,
  down: <path d="M7 2h2v7h3l-4 6-4-6h3z" fill="#ff0000" />,
  up: <path d="M7 14h2V7h3L8 1 4 7h3z" fill="#0000ff" />,
  circle: <circle cx="8" cy="8" r="6.5" fill="none" stroke="#000" />,
  rect: <rect x="2.5" y="1.5" width="11" height="13" fill="none" stroke="#000" />,
};
const Tool = ({ name, selected }: { name: string; selected?: boolean }) => (
  <div className={`flex h-[26px] w-[23px] shrink-0 items-center justify-center ${selected ? "border border-[#b0b0b0] bg-white" : ""}`}>
    <I>{icons[name]}</I>
  </div>
);
const Sep = ({ w }: { w: string }) => (
  <div className={`flex h-[24px] shrink-0 items-center justify-center ${w}`}>
    <div className="h-full w-px bg-[#a8a8a8]" />
  </div>
);
const Dots = ({ w }: { w: string }) => (
  <div className={`flex h-[26px] shrink-0 items-center justify-center ${w}`}>
    <div className="h-full w-0 border-l border-dotted border-[#909090]" />
  </div>
);
const Toolbar = () => (
  <div className="flex h-[31px] items-center border-t border-[#c8c8c8] bg-[#f4f4f4] pl-[8px] pt-[2px] border-b border-b-[#a0a0a0]">
    <Dots w="w-[5.5px]" />
    {["doc", "open", "copies", "paste", "save"].map((n) => <Tool key={n} name={n} />)}
    <Sep w="w-[9px]" />
    {["preview", "printer"].map((n) => <Tool key={n} name={n} />)}
    <Sep w="w-[8px]" />
    {["winA", "winB", "lock", "tools", "figures"].map((n) => <Tool key={n} name={n} />)}
    <Sep w="w-[9px]" />
    <div className="flex h-[26px] w-[137px] shrink-0 items-center justify-end border border-[#d8d8d8] bg-white pr-[6px]">
      <svg width={9} height={8} viewBox="0 0 9 8"><path d="M0 1h9L4.5 8z" fill="#000" /></svg>
    </div>
    <div className="flex w-[14px] shrink-0 items-center justify-center">
      <svg width={5} height={10} viewBox="0 0 5 10"><path d="M0 0l5 5-5 5z" fill="#000" /></svg>
    </div>
    <div className="w-[10px] shrink-0" />
    <Tool name="find" />
    <Dots w="w-[22px]" />
    {["calcA", "calcB", "calcC"].map((n) => <Tool key={n} name={n} />)}
    <Sep w="w-[9px]" />
    {["chartRed", "updown", "stack"].map((n) => <Tool key={n} name={n} />)}
    <Sep w="w-[8px]" />
    {["diag", "docUp"].map((n) => <Tool key={n} name={n} />)}
    <Sep w="w-[7px]" />
    {["clock", "scale", "blackChart", "bars", "bars2"].map((n) => <Tool key={n} name={n} />)}
    <Sep w="w-[7px]" />
    {["zoomH1", "zoomH2"].map((n) => <Tool key={n} name={n} />)}
    <Sep w="w-[7px]" />
    {["zoomIn", "zoomOut"].map((n) => <Tool key={n} name={n} />)}
    <div className="w-[9px] shrink-0" />
    <Tool name="cursor" selected />
    <Tool name="blackT" />
    <Sep w="w-[9px]" />
    <Tool name="hammer" />
    <Sep w="w-[8px]" />
    <Tool name="sheet" />
    <div className="w-[8px] shrink-0" />
    <Tool name="note" />
    <Dots w="w-[19px]" />
    {["trend", "vlines", "hlines", "gridBlue", "arc", "fib", "steps", "speed", "andrew", "harrow", "parallel", "arcs", "pencil"].map((n) => <Tool key={n} name={n} />)}
    <Sep w="w-[8px]" />
    {["curve", "down", "up", "circle", "rect"].map((n) => <Tool key={n} name={n} />)}
    <div className="w-[23px] shrink-0 text-center text-[12px] leading-none font-['Open_Sans',sans-serif] text-black">abc</div>
  </div>
);

/* ---------- tabs ---------- */
const tabs: [string, number, boolean?][] = [
  ["SP500 100", 83],
  ["SP500 TF240", 97],
  ["SP500_TF120", 102],
  ["SP500_TF60", 95, true],
  ["SP500_TF30", 94],
  ["SP500 Frame Bassi", 132],
  ["SP500 Giornaliero", 124],
  ["ANNUALE Indici_2", 121],
  ["No PREZZI 1", 97],
];
const Tab = ({ label, w, active }: { label: string; w: number; active?: boolean }) => (
  <div className="relative flex h-[17px] shrink-0 items-center justify-center pt-[1px]" style={{ width: w }}>
    <svg className="absolute inset-0" width={w} height={17} viewBox={`0 0 ${w} 17`}>
      <path d={`M0 0L5 17H${w - 5}L${w} 0`} fill={active ? "#fff" : "#f0f0f0"} stroke="#000" />
    </svg>
    <span className={`relative whitespace-nowrap text-[12px] leading-none text-black font-['Liberation_Sans',sans-serif] ${active ? "font-bold" : ""}`}>{label}</span>
  </div>
);

const statusCells: [string, string, string][] = [
  ["Acct:", "w-[48px]", "text-[#202020]"],
  ["Open Psns:", "w-[90px]", "text-[#202020]"],
  ["DT BP:", "w-[63px]", "text-[#202020]"],
  ["Purch Pwr:", "w-[87px]", "text-[#202020]"],
  ["Closed P/L:", "w-[93px]", "text-[#202020]"],
  ["RT TE:", "w-[60px]", "text-[#202020]"],
  ["Open P/L:", "w-[84px]", "text-[#202020]"],
  ["ORDER BAR", "w-[87px]", "text-[#1a8a1a]"],
  ["MACROS", "w-[69px]", "text-[#1a8a1a]"],
];

const dates = ["3/08","3/09","3/11","3/15","3/17","3/18","3/22","3/24","3/28","3/30","4/01","4/05","4/07","4/11","4/12","4/14","4/20","4/22","4/26","4/28","5/02","5/04","5/06","5/09","5/11","5/13"];
const dateTicks = [43, 63, ...Array.from({ length: 25 }, (_, i) => 179 + 68 * i)];

const ax1L: AL[] = [["4,600.00",148],["4,500.00",202],["4,400.00",255],["4,300.00",308],["4,200.00",362],["4,100.00",415],["4,000.00",468],["3,900.00",522]].map(([t,y]) => ({ t: t as string, y: y as number }));
const ax1B: AB[] = [
  { t: "4,534.45", top: 173, bg: "#a6caf0" },
  { t: "4,131.42", top: 389, bg: "#a6caf0" },
  { t: "4,070.76", top: 422, bg: "#ff0000" },
  { t: "3,985.50", top: 467, bg: "#6666ff" },
];
const ax2L: AL[] = [["6.00",606],["2.00",647],["-2.00",688],["-6.00",728]].map(([t,y]) => ({ t: t as string, y: y as number }));
const ax2B: AB[] = [
  { t: "8.00", top: 576, bg: "#ff0000" },
  { t: "4.00", top: 616, bg: "#808000" },
  { t: "0.00", top: 657, bg: "#0000ff" },
  { t: "-4.00", top: 700, bg: "#6b6b00", h: 21 },
  { t: "-2.51", top: 683, bg: "#00ffff" },
  { t: "-8.00", top: 739, bg: "#ff0000" },
];
const ax3L: AL[] = [["150.00",795],["50.00",847],["-50.00",901],["-150.00",955]].map(([t,y]) => ({ t: t as string, y: y as number }));
const ax3B: AB[] = [
  { t: "120.00", top: 801, bg: "#808080" },
  { t: "-120.00", top: 928, bg: "#808080", h: 5 },
  { t: "-127.67", top: 932, bg: "#00ffff" },
];

export default function App() {
  return (
    <div className="flex h-[1080px] w-[1920px] flex-col overflow-hidden bg-[#f0f0f0] font-['Open_Sans',sans-serif]">
      {/* title bar */}
      <div className="flex h-[28px] shrink-0 items-center justify-between border-b border-[#404850] bg-[linear-gradient(90deg,#b6c8da_0%,#c8d6e2_20%,#c2d4e6_40%,#a9cbec_60%,#b6d6f4_77.5%,#7ea4c8_78%,#1f4268_78.4%,#234a72_100%)]">
        <div className="flex items-center pt-[2px]">
          <svg width={22} height={24} viewBox="0 0 22 24" className="ml-[1px]">
            <path d="M5 22C1 14 4 4 13 1c-3 5-2 7 0 9-4 0-5 6-3 12z" fill="#1e5fc0" />
            <path d="M13 10c4-3 6-1 6 3s-3 8-7 9c3-4 4-8 1-12z" fill="#3a8ae0" />
          </svg>
          <span className="ml-[3px] whitespace-pre text-[14.3px] leading-none text-[#101820]">TradeStation 8.1 - SP500_NASDAQ - SP500_TF60 - [Chart Analysis - GS:S&amp;P500  60 min  [CME] S&amp;P500 FUT]</span>
        </div>
        <div className="flex h-[25px] self-start border-x border-b border-[#7a8a9a] rounded-b-[3px] bg-white/10">
          <div className="flex w-[37px] items-end justify-center border-r border-white/30 pb-[5px]">
            <div className="h-[6px] w-[17px] border border-[#445] bg-white" />
          </div>
          <div className="flex w-[38px] items-center justify-center border-r border-white/30">
            <svg width={20} height={20} viewBox="0 0 20 20">
              <rect x="6.5" y="1.5" width="12" height="13" fill="#d8e0e8" stroke="#333" />
              <rect x="2.5" y="4.5" width="12" height="14" fill="#eef" stroke="#333" />
              <rect x="6" y="8" width="5" height="6" fill="none" stroke="#333" />
            </svg>
          </div>
          <div className="flex w-[63px] items-center justify-center">
            <svg width={20} height={18} viewBox="0 0 20 18">
              <path d="M2 1h5l3 5 3-5h5l-5.5 8L18 17h-5l-3-5-3 5H2l5.5-8z" fill="#fff" stroke="#445" />
            </svg>
          </div>
        </div>
      </div>
      {/* menu bar */}
      <div className="flex h-[29px] shrink-0 items-center justify-between bg-[linear-gradient(180deg,#ffffff_0%,#f4f6fb_25%,#e3e6f3_100%)] text-[14.5px] text-[#6a6a6a]">
        <div className="flex items-center">
          <svg width={19} height={18} viewBox="0 0 19 18" className="ml-[7px]">
            <rect width="19" height="18" fill="#000" />
            <rect width="19" height="2" fill="#2040d0" />
            <rect y="16" width="19" height="2" fill="#d02020" />
            <path d="M2 12l3-4 3 2 3-6 3 4 3-3" stroke="#20e060" fill="none" />
          </svg>
          <div className="ml-[7px] flex">
            <span className="w-[38px]">File</span>
            <span className="w-[39px]">Edit</span>
            <span className="w-[46px]">View</span>
            <span className="w-[50px]">Insert</span>
            <span className="w-[61px]">Format</span>
            <span className="w-[70px]">Drawing</span>
            <span className="w-[69px]">Window</span>
            <span>Help</span>
          </div>
        </div>
        <div className="flex gap-[2px] self-end">
          {["–", "❐", "×"].map((g) => (
            <div key={g} className="flex h-[26px] w-[22px] items-center justify-center border border-[#c8d4e0] bg-[#dde8f4] text-[12px] leading-none text-[#707880]">
              {g}
            </div>
          ))}
        </div>
      </div>
      <Toolbar />
      {/* chart */}
      <div className="flex shrink-0 flex-col border-l-2 border-l-[#808080] bg-[#03040a]">
        <div className="flex h-[469px]">
          <div className="relative h-[469px] w-[1828px]">
            <LegendRow items={legend1} top="top-[2px]" />
            <MainPlot />
          </div>
          <AxisCol labels={ax1L} badges={ax1B} ticks={[148, 202, 255, 308, 362, 415, 468, 522]} h="h-[469px]" top={89} />
        </div>
        <div className="flex h-[206px]">
          <div className="relative h-[206px] w-[1828px]">
            <LegendRow items={legend2} top="top-[1px]" />
            <Pane2Plot />
          </div>
          <AxisCol labels={ax2L} badges={ax2B} ticks={[606, 647, 688, 728]} h="h-[206px]" top={558} line />
        </div>
        <div className="flex h-[225px]">
          <div className="relative h-[225px] w-[1828px]">
            <LegendRow items={legend3} top="top-[2px]" />
            <Pane3Plot />
          </div>
          <AxisCol labels={ax3L} badges={ax3B} ticks={[795, 847, 873, 901, 926]} h="h-[225px]" top={764} line />
        </div>
        {/* dates */}
        <div className="relative flex h-[29px] items-center border-t border-white pl-[68px] pt-[4px] text-[20px] leading-none text-white font-['Liberation_Sans',sans-serif]">
          {dateTicks.map((x) => (
            <span key={x} className={`absolute top-0 w-px bg-white ${x === 63 ? "h-[10px]" : "h-[4px]"}`} style={{ left: x - 2 }} />
          ))}
          {dates.map((d, i) => (
            <span key={d} className={`shrink-0 ${i === 0 ? "w-[48px]" : "w-[68px]"}`}>{d}</span>
          ))}
        </div>
      </div>
      {/* horizontal scrollbar */}
      <div className="flex h-[22px] shrink-0 items-center justify-between border-b border-[#d0d0d0] bg-[#f0f0f0] px-[3px]">
        <div className="flex h-[20px] w-[19px] items-center justify-center rounded-[2px] border border-[#a8a8a8] bg-[#dcdcdc]">
          <svg width={5} height={9} viewBox="0 0 5 9"><path d="M5 0L0 4.5 5 9z" fill="#505050" /></svg>
        </div>
        <div className="flex">
          <div className="flex h-[20px] w-[20px] items-center justify-center rounded-[2px] border border-[#a8a8a8] bg-[#dcdcdc] text-[10px] text-[#505050]">
            <div className="h-[9px] w-[6px] border-x border-[#606060] bg-[linear-gradient(90deg,transparent_40%,#606060_40%,#606060_60%,transparent_60%)]" />
          </div>
          <div className="flex h-[20px] w-[20px] items-center justify-center rounded-[2px] border border-[#a8a8a8] bg-[#dcdcdc]">
            <svg width={5} height={9} viewBox="0 0 5 9"><path d="M0 0l5 4.5L0 9z" fill="#505050" /></svg>
          </div>
        </div>
      </div>
      {/* tabs */}
      <div className="flex h-[18px] shrink-0 items-start border-t border-black bg-[#f0f0f0]">
        <div className="ml-[2px] mr-[3px] flex">
          {["M5 1v8M8 1L3 5l5 4z", "M7 1L2 5l5 4z", "M2 1l5 4-5 4z", "M8 1v8M2 1l5 4-5 4z"].map((d) => (
            <div key={d} className="flex h-[17px] w-[16px] items-center justify-center border-r border-[#a0a0a0] bg-[#e4e4e4]">
              <svg width={10} height={10} viewBox="0 0 10 10"><path d={d} fill="#707070" stroke="#707070" strokeWidth={0.5} /></svg>
            </div>
          ))}
        </div>
        {tabs.map(([l, w, a]) => (
          <Tab key={l} label={l} w={w} active={a} />
        ))}
      </div>
      {/* status bar */}
      <div className="flex h-[20px] shrink-0 items-center justify-between border-t border-[#a0a0a0] bg-[#f0eeee] pt-[3px] text-[14px] leading-none text-[#202020]">
        <span className="ml-[2px]">For Help, press F1</span>
        <div className="flex h-full items-center">
          {statusCells.map(([t, w, c]) => (
            <div key={t} className={`flex h-full items-center border-r border-[#d0d0d0] pl-[4px] whitespace-nowrap ${w} ${c}`}>{t}</div>
          ))}
          <div className="flex h-full w-[19px] items-center justify-center border-r border-[#d0d0d0]">
            <div className="h-[10px] w-[10px] rounded-full bg-[radial-gradient(circle_at_35%_35%,#ff9090,#e00000_55%,#800000)]" />
          </div>
          <div className="w-[124px] pl-[6px] whitespace-nowrap">13/05/2022 14:51</div>
        </div>
      </div>
      <div className="h-[2px] shrink-0 bg-[#9fb2c6]" />
    </div>
  );
}
